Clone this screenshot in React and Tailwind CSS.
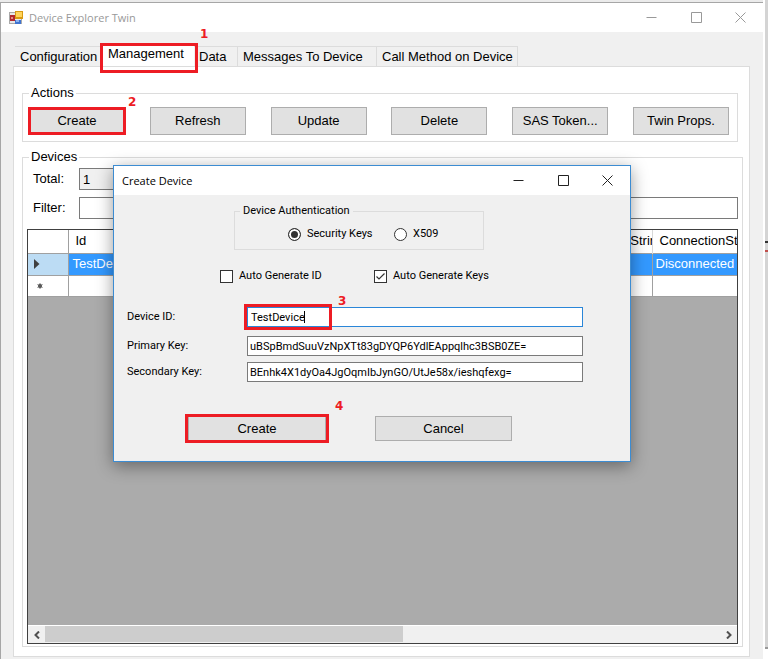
import React, { useState } from "react";

const actions = ["Create", "Refresh", "Update", "Delete", "SAS Token...", "Twin Props."];

const tabs = [
  { name: "Configuration", width: "w-[87px]" },
  { name: "Management", width: "w-[92px]" },
  { name: "Data", width: "w-[44px]" },
  { name: "Messages To Device", width: "w-[139px]" },
  { name: "Call Method on Device", width: "w-[141px]" },
];

const Highlight = ({ className }) => (
  <span
    className={`absolute border-[3px] border-[#ed1c24] pointer-events-none ${className}`}
  />
);

const StepNumber = ({ children, className }) => (
  <span
    className={`absolute z-10 font-['DejaVu_Sans',sans-serif] text-xs leading-4 font-bold text-[#ed1c24] ${className}`}
  >
    {children}
  </span>
);

const AppIcon = () => (
  <svg width="14" height="14" viewBox="0 0 14 14" aria-hidden="true">
    <rect x="0.5" y="1.5" width="12" height="11" fill="#e8e8e8" stroke="#a9a9a9" />
    <rect x="1" y="4" width="5" height="6" fill="#b3282d" />
    <rect x="2" y="6" width="2" height="2" fill="#e58a86" />
    <rect x="6" y="0" width="8" height="8" fill="#d99a12" />
    <rect x="7" y="1" width="6" height="5" fill="#ffd45a" />
    <rect x="6" y="9" width="6" height="4" fill="#3f74d1" />
    <rect x="7" y="9" width="3" height="2" fill="#8db3ee" />
  </svg>
);

const WindowControls = ({ className }) => (
  <div className={`flex items-center ${className}`}>
    <button aria-label="Minimize" className="flex w-[45px] justify-center">
      <svg width="11" height="11" viewBox="0 0 11 11" fill="none" stroke="currentColor">
        <path d="M0.5 5.5H10.5" />
      </svg>
    </button>
    <button aria-label="Maximize" className="flex w-[44px] justify-center">
      <svg width="11" height="11" viewBox="0 0 11 11" fill="none" stroke="currentColor">
        <path d="M0.5 0.5H10.5V10.5H0.5Z" />
      </svg>
    </button>
    <button aria-label="Close" className="flex w-[45px] justify-center">
      <svg width="11" height="11" viewBox="0 0 11 11" fill="none" stroke="currentColor">
        <path d="M0.5 0.5L10.5 10.5M10.5 0.5L0.5 10.5" />
      </svg>
    </button>
  </div>
);

const DeviceGrid = () => (
  <div className="mt-[10px] flex flex-1 flex-col overflow-hidden border border-[#404040] bg-[#ababab]">
    <table className="w-full table-fixed border-collapse bg-white text-left text-[13px] leading-4">
      <colgroup>
        <col className="w-10" />
        <col />
        <col className="w-24" />
        <col className="w-[85px]" />
      </colgroup>
      <thead>
        <tr className="h-[23px] border-b border-[#a0a0a0]">
          <th aria-label="Row" className="border-r border-[#a0a0a0]" />
          <th className="border-r border-[#d8d8d8] px-[7px] font-normal">Id</th>
          <th className="overflow-hidden border-r border-[#d8d8d8] pl-2 font-normal whitespace-nowrap">
            ConnectionString
          </th>
          <th className="overflow-hidden pl-[7px] font-normal whitespace-nowrap">
            ConnectionState
          </th>
        </tr>
      </thead>
      <tbody>
        <tr className="h-[22px] border-b border-[#a0a0a0] bg-[#3399ff] text-white">
          <td className="border-r border-[#a0a0a0] bg-[#bcdcf4] pl-[6px]">
            <svg width="6" height="10" viewBox="0 0 6 10" aria-hidden="true">
              <path d="M0 0L5.5 5L0 10Z" fill="#404040" />
            </svg>
          </td>
          <td className="border-r border-[#a0a0a0] px-1">TestDevice</td>
          <td className="border-r border-[#a0a0a0]" />
          <td className="overflow-hidden pl-[3px] whitespace-nowrap">Disconnected</td>
        </tr>
        <tr className="h-[21px] border-b border-[#a0a0a0]">
          <td className="border-r border-[#a0a0a0] pl-[9px]">
            <svg width="6" height="6" viewBox="0 0 6 6" aria-hidden="true">
              <circle cx="3" cy="3" r="2" fill="#404040" />
              <path d="M3 0V6M0.4 1.5L5.6 4.5M5.6 1.5L0.4 4.5" stroke="#606060" strokeWidth="0.8" />
            </svg>
          </td>
          <td className="border-r border-[#a0a0a0]" />
          <td className="border-r border-[#a0a0a0]" />
          <td />
        </tr>
      </tbody>
    </table>

    {/* Horizontal scroll bar */}
    <div className="mt-auto flex h-[18px] items-stretch border-t border-white bg-[#f0f0f0] text-[#505050]">
      <button aria-label="Scroll left" className="flex w-[17px] items-center justify-center">
        <svg width="6" height="8" viewBox="0 0 6 8" fill="none" stroke="currentColor" strokeWidth="2">
          <path d="M5 0.5L1.5 4L5 7.5" />
        </svg>
      </button>
      <div className="flex-1">
        <div className="h-4 w-[53%] bg-[#cdcdcd]" />
      </div>
      <button aria-label="Scroll right" className="flex w-[17px] items-center justify-center">
        <svg width="6" height="8" viewBox="0 0 6 8" fill="none" stroke="currentColor" strokeWidth="2">
          <path d="M1 0.5L4.5 4L1 7.5" />
        </svg>
      </button>
    </div>
  </div>
);

const CheckBox = ({ label, defaultChecked }) => (
  <label className="flex items-center gap-[6px]">
    <span className="relative flex">
      <input
        type="checkbox"
        defaultChecked={defaultChecked}
        className="peer size-[13px] appearance-none border border-[#333333] bg-white"
      />
      <svg
        className="pointer-events-none absolute inset-0 hidden peer-checked:block"
        width="13"
        height="13"
        viewBox="0 0 13 13"
        fill="none"
        stroke="#333333"
        strokeWidth="1.2"
      >
        <path d="M2.5 6.5L5 9L10.5 3.5" />
      </svg>
    </span>
    {label}
  </label>
);

const Radio = ({ label, defaultChecked }) => (
  <label className="flex items-center gap-[6px]">
    <input
      type="radio"
      name="auth"
      defaultChecked={defaultChecked}
      className="size-[13px] appearance-none rounded-full border border-[#333333] bg-white checked:bg-[#333333] checked:shadow-[inset_0_0_0_2px_white]"
    />
    {label}
  </label>
);

const KeyField = ({ id, label, value }) => (
  <div className="flex h-5 items-center">
    <label htmlFor={id} className="w-[120px]">
      {label}
    </label>
    <input
      id={id}
      defaultValue={value}
      className="h-5 flex-1 border border-[#7a7a7a] bg-white px-[2px]"
    />
  </div>
);

const CreateDeviceDialog = () => (
  <div
    role="dialog"
    aria-labelledby="dialog-title"
    className="absolute top-[165px] left-[113px] z-20 w-[518px] border border-[#3c8cd2] bg-[#f0f0f0] font-['Roboto','Liberation_Sans',sans-serif] text-[11px] leading-[14px] shadow-[0_4px_16px_rgba(0,0,0,0.4)]"
  >
    <div className="flex h-[29px] items-center justify-between bg-white pl-2">
      <h2 id="dialog-title" className="font-['Open_Sans',sans-serif] text-[11px]">
        Create Device
      </h2>
      <WindowControls className="text-[#222222]" />
    </div>

    <div className="px-[13px] pt-[9px] pb-5">
      <fieldset className="ml-[107px] h-[46px] w-[250px] border border-[#dcdcdc]">
        <legend className="ml-[5px] px-[3px]">Device Authentication</legend>
        <div className="flex pt-[9px] pl-[53px]">
          <div className="w-[106px]">
            <Radio label="Security Keys" defaultChecked />
          </div>
          <Radio label="X509" />
        </div>
      </fieldset>

      <div className="mt-[19px] ml-[93px] flex h-[14px] items-center">
        <div className="w-[154px]">
          <CheckBox label="Auto Generate ID" />
        </div>
        <CheckBox label="Auto Generate Keys" defaultChecked />
      </div>

      <div className="mt-6 pr-[34px]">
        <div className="flex h-5 items-center">
          <label htmlFor="device-id" className="w-[120px]">
            Device ID:
          </label>
          <div className="relative flex flex-1">
            <input
              id="device-id"
              defaultValue="TestDevice"
              className="h-5 w-full border border-[#2a86d8] bg-white px-[3px]"
            />
            <span className="absolute top-1 left-[57px] h-3 w-px bg-black" />
            <Highlight className="-top-[3px] -left-[3px] h-[26px] w-[88px]" />
            <StepNumber className="-top-[14px] left-[91px]">3</StepNumber>
          </div>
        </div>
        <div className="mt-[9px] flex flex-col gap-[6px]">
          <KeyField
            id="primary-key"
            label="Primary Key:"
            value="uBSpBmdSuuVzNpXTt83gDYQP6YdlEAppqlhc3BSB0ZE="
          />
          <KeyField
            id="secondary-key"
            label="Secondary Key:"
            value="BEnhk4X1dyOa4JgOqmIbJynGO/UtJe58x/ieshqfexg="
          />
        </div>
      </div>

      <div className="mt-[34px] ml-[61px] flex gap-[49px] font-['Liberation_Sans',sans-serif] text-[13px]">
        <div className="relative">
          <button className="block h-[25px] w-[138px] border border-[#adadad] bg-[#e1e1e1]">
            Create
          </button>
          <Highlight className="-top-[2px] -left-[3px] h-[29px] w-36" />
          <StepNumber className="-top-[18px] left-[147px]">4</StepNumber>
        </div>
        <button className="h-[25px] w-[137px] border border-[#adadad] bg-[#e1e1e1]">
          Cancel
        </button>
      </div>
    </div>
  </div>
);

const App = () => {
  const [activeTab, setActiveTab] = useState("Management");

  return (
    <div className="relative flex min-h-screen overflow-hidden bg-white font-['Liberation_Sans',sans-serif] text-[13px] leading-4 text-black">
      <div className="mb-[6px] flex flex-1 flex-col border-t-2 border-[#ebebeb]">
        <div className="flex flex-1 flex-col border-t border-l border-[#a6a6a6] bg-[#f0f0f0]">
          {/* Title bar */}
          <div className="flex h-[29px] items-center justify-between bg-white pl-2">
            <div className="flex items-center gap-[6px]">
              <AppIcon />
              <h1 className="font-['Open_Sans',sans-serif] text-[11px] text-[#999999]">
                Device Explorer Twin
              </h1>
            </div>
            <WindowControls className="text-[#999999]" />
          </div>

          {/* Tabs */}
          <div className="mt-3 ml-[14px] flex items-end">
            {tabs.map((tab) => (
              <div key={tab.name} className={`relative ${tab.width}`}>
                <button
                  onClick={() => setActiveTab(tab.name)}
                  className={
                    activeTab === tab.name
                      ? "block h-[22px] w-full bg-white pb-[2px] pl-[6px] text-left whitespace-nowrap"
                      : "block h-5 w-full border-t border-r border-[#dcdcdc] bg-[#f0f0f0] pl-[5px] text-left whitespace-nowrap"
                  }
                >
                  {tab.name}
                </button>
                {tab.name === "Management" && (
                  <>
                    <Highlight className="-top-[1px] -left-[2px] z-10 h-[30px] w-[98px]" />
                    <StepNumber className="-top-[18px] left-[98px]">1</StepNumber>
                  </>
                )}
              </div>
            ))}
          </div>

          <div className="mr-[13px] mb-[2px] ml-3 flex flex-1 flex-col border border-[#dcdcdc] bg-white pt-[18px] pr-[6px] pb-[9px] pl-2">
            <fieldset className="mr-[5px] border border-[#dcdcdc] pt-[6px] pr-2 pb-[6px] pl-[6px]">
              <legend className="px-[2px]">Actions</legend>
              <div className="flex justify-between">
                {actions.map((action) => (
                  <div key={action} className="relative">
                    <button className="block h-7 w-24 border border-[#adadad] bg-[#e1e1e1] whitespace-nowrap">
                      {action}
                    </button>
                    {action === "Create" && (
                      <>
                        <Highlight className="-inset-x-[1px] inset-y-0" />
                        <StepNumber className="-top-[13px] left-[99px]">2</StepNumber>
                      </>
                    )}
                  </div>
                ))}
              </div>
            </fieldset>

            <fieldset className="mt-[7px] flex flex-1 flex-col border border-[#dcdcdc] pt-[3px] pr-1 pb-[2px] pl-1">
              <legend className="ml-[2px] px-[2px]">Devices</legend>
              <div className="flex items-center pl-[6px]">
                <label htmlFor="total" className="w-[46px]">
                  Total:
                </label>
                <input
                  id="total"
                  readOnly
                  defaultValue="1"
                  className="h-[22px] w-20 border border-[#7a7a7a] bg-[#f0f0f0] px-[3px]"
                />
              </div>
              <div className="mt-[7px] flex items-center pl-[6px]">
                <label htmlFor="filter" className="w-[46px]">
                  Filter:
                </label>
                <input
                  id="filter"
                  className="h-[22px] flex-1 border border-[#7a7a7a] bg-white px-[3px]"
                />
              </div>
              <DeviceGrid />
            </fieldset>
          </div>
        </div>
      </div>

      {/* Edge of the window behind */}
      <div className="mr-0 mb-4 ml-[2px] flex w-[3px] flex-col bg-[#d4d4d4]">
        <div className="mt-[241px] h-[2px] bg-[#333333]" />
        <div className="mt-[7px] h-[2px] bg-[#c0504d]" />
        <div className="mt-auto h-[2px] bg-[#999999]" />
      </div>

      <CreateDeviceDialog />
    </div>
  );
};

export default App;
